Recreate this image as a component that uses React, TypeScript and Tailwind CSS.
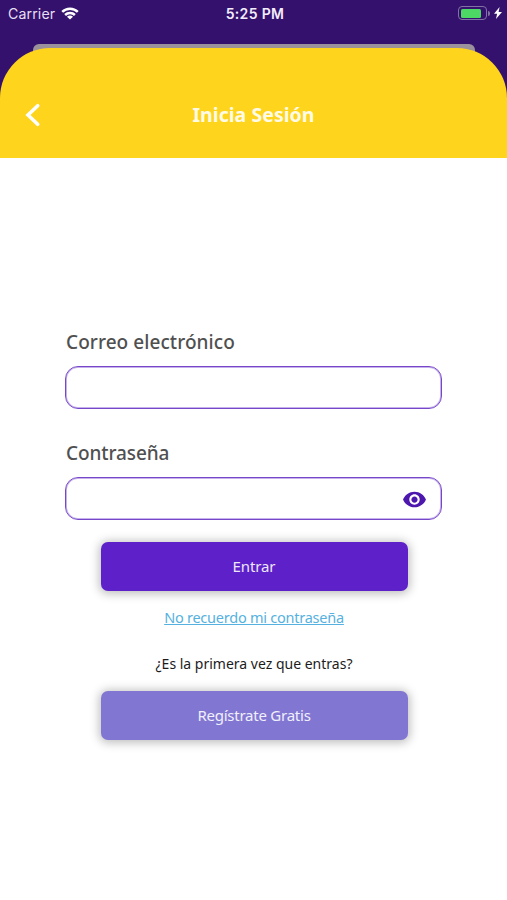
import { MdVisibility } from 'react-icons/md'

function StatusBar() {
  return (
    <div className="flex h-7 items-center justify-between pl-2 pr-[5px] font-['Inter',sans-serif] text-white">
      <div className="flex w-40 items-center gap-[6px]">
        <span className="text-[14.2px] tracking-[0.1px] text-[#e6dff2]">Carrier</span>
        <svg className="-mt-px" width="18" height="13" viewBox="0 0 18 13" fill="none" stroke="currentColor" strokeWidth="2.5">
          <path d="M1.2 4.9a11.2 11.2 0 0 1 15.6 0" />
          <path d="M4.1 8a7 7 0 0 1 9.8 0" />
          <path d="M9 12.6 6 9.8a4.2 4.2 0 0 1 6 0Z" fill="currentColor" stroke="none" />
        </svg>
      </div>
      <span className="-mt-px text-[14px] font-semibold tracking-[0.35px] text-[#f3edfc]">5:25 PM</span>
      <div className="-mt-[2px] flex w-40 items-center justify-end">
        <div className="h-[14px] w-[29px] rounded-[4px] border border-[#8172a5] p-[1.5px]">
          <div className="h-full w-[20px] rounded-[1.5px] bg-[#4cd964]" />
        </div>
        <div className="ml-px h-[5px] w-[2px] rounded-r-full bg-[#8172a5]" />
        <svg className="ml-[4px]" width="8" height="12" viewBox="0 0 8 12" fill="currentColor">
          <path d="M5.6 0 0 6.8h3.1L2 12l6-7.1H4.6Z" />
        </svg>
      </div>
    </div>
  )
}

function Header() {
  return (
    <header className="bg-[#34116d]">
      <StatusBar />
      <div className="ml-[33px] mr-8 mt-4 h-4 rounded-t-[6px] bg-[#9a919c]" />
      <div className="relative -mt-3 flex h-[110px] items-center rounded-t-[50px] bg-[#ffd41d] pt-6">
        <svg className="ml-[25px]" width="16" height="24" viewBox="0 0 16 24" fill="none" stroke="white" strokeWidth="3.6" strokeLinecap="round">
          <path d="M12.7 2.7 3 12l9.7 9.3" />
        </svg>
        <h1 className="absolute inset-x-0 text-center text-[19.5px] font-bold tracking-[0.04px] text-[#fffbe6]">
          Inicia Sesión
        </h1>
      </div>
    </header>
  )
}

function Label({ children }: { children: string }) {
  return (
    <label className="block h-7 pl-px text-[19px] leading-7 font-medium text-[#505050]">
      {children}
    </label>
  )
}

export default function App() {
  return (
    <div className="h-[900px] w-[507px] overflow-hidden bg-white font-['Noto_Sans',sans-serif]">
      <Header />
      <main className="pl-[65px] pr-[64px] pt-[170px]">
        <div className="tracking-[0.07px]">
          <Label>Correo electrónico</Label>
        </div>
        <div className="mt-[10px] h-[43px] w-[377px] rounded-[13px] border border-[#7747c9] shadow-[inset_0_0_0_1px_#c6b1ec]" />

        <div className="mt-[30px] tracking-[-0.1px]">
          <Label>Contraseña</Label>
        </div>
        <div className="mt-[10px] flex h-[43px] w-[377px] items-center justify-end rounded-[13px] border border-[#7747c9] pt-px pr-[14px] shadow-[inset_0_0_0_1px_#c6b1ec]">
          <MdVisibility size={25} color="#4d17ae" />
        </div>

        <div className="mx-[35.5px] mt-[22px] flex flex-col items-center">
          <button className="h-[49px] w-full rounded-[7px] bg-[#5d20c9] text-[15px] tracking-[-0.1px] text-[#eee7fa] shadow-[0_1px_10px_2px_rgba(0,0,0,0.25)]">
            Entrar
          </button>
          <a className="mt-[15px] text-[14.5px] leading-[22px] tracking-[-0.24px] whitespace-nowrap text-[#56b1e0] underline">
            No recuerdo mi contraseña
          </a>
          <p className="mt-[25px] text-[14px] leading-[22px] whitespace-nowrap text-[#1c1c1c]">
            ¿Es la primera vez que entras?
          </p>
          <button className="mt-4 h-[49px] w-full rounded-[7px] bg-[#8177d2] text-[15px] tracking-[-0.24px] text-[#f1effc] shadow-[0_1px_10px_2px_rgba(0,0,0,0.25)]">
            Regístrate Gratis
          </button>
        </div>
      </main>
    </div>
  )
}
